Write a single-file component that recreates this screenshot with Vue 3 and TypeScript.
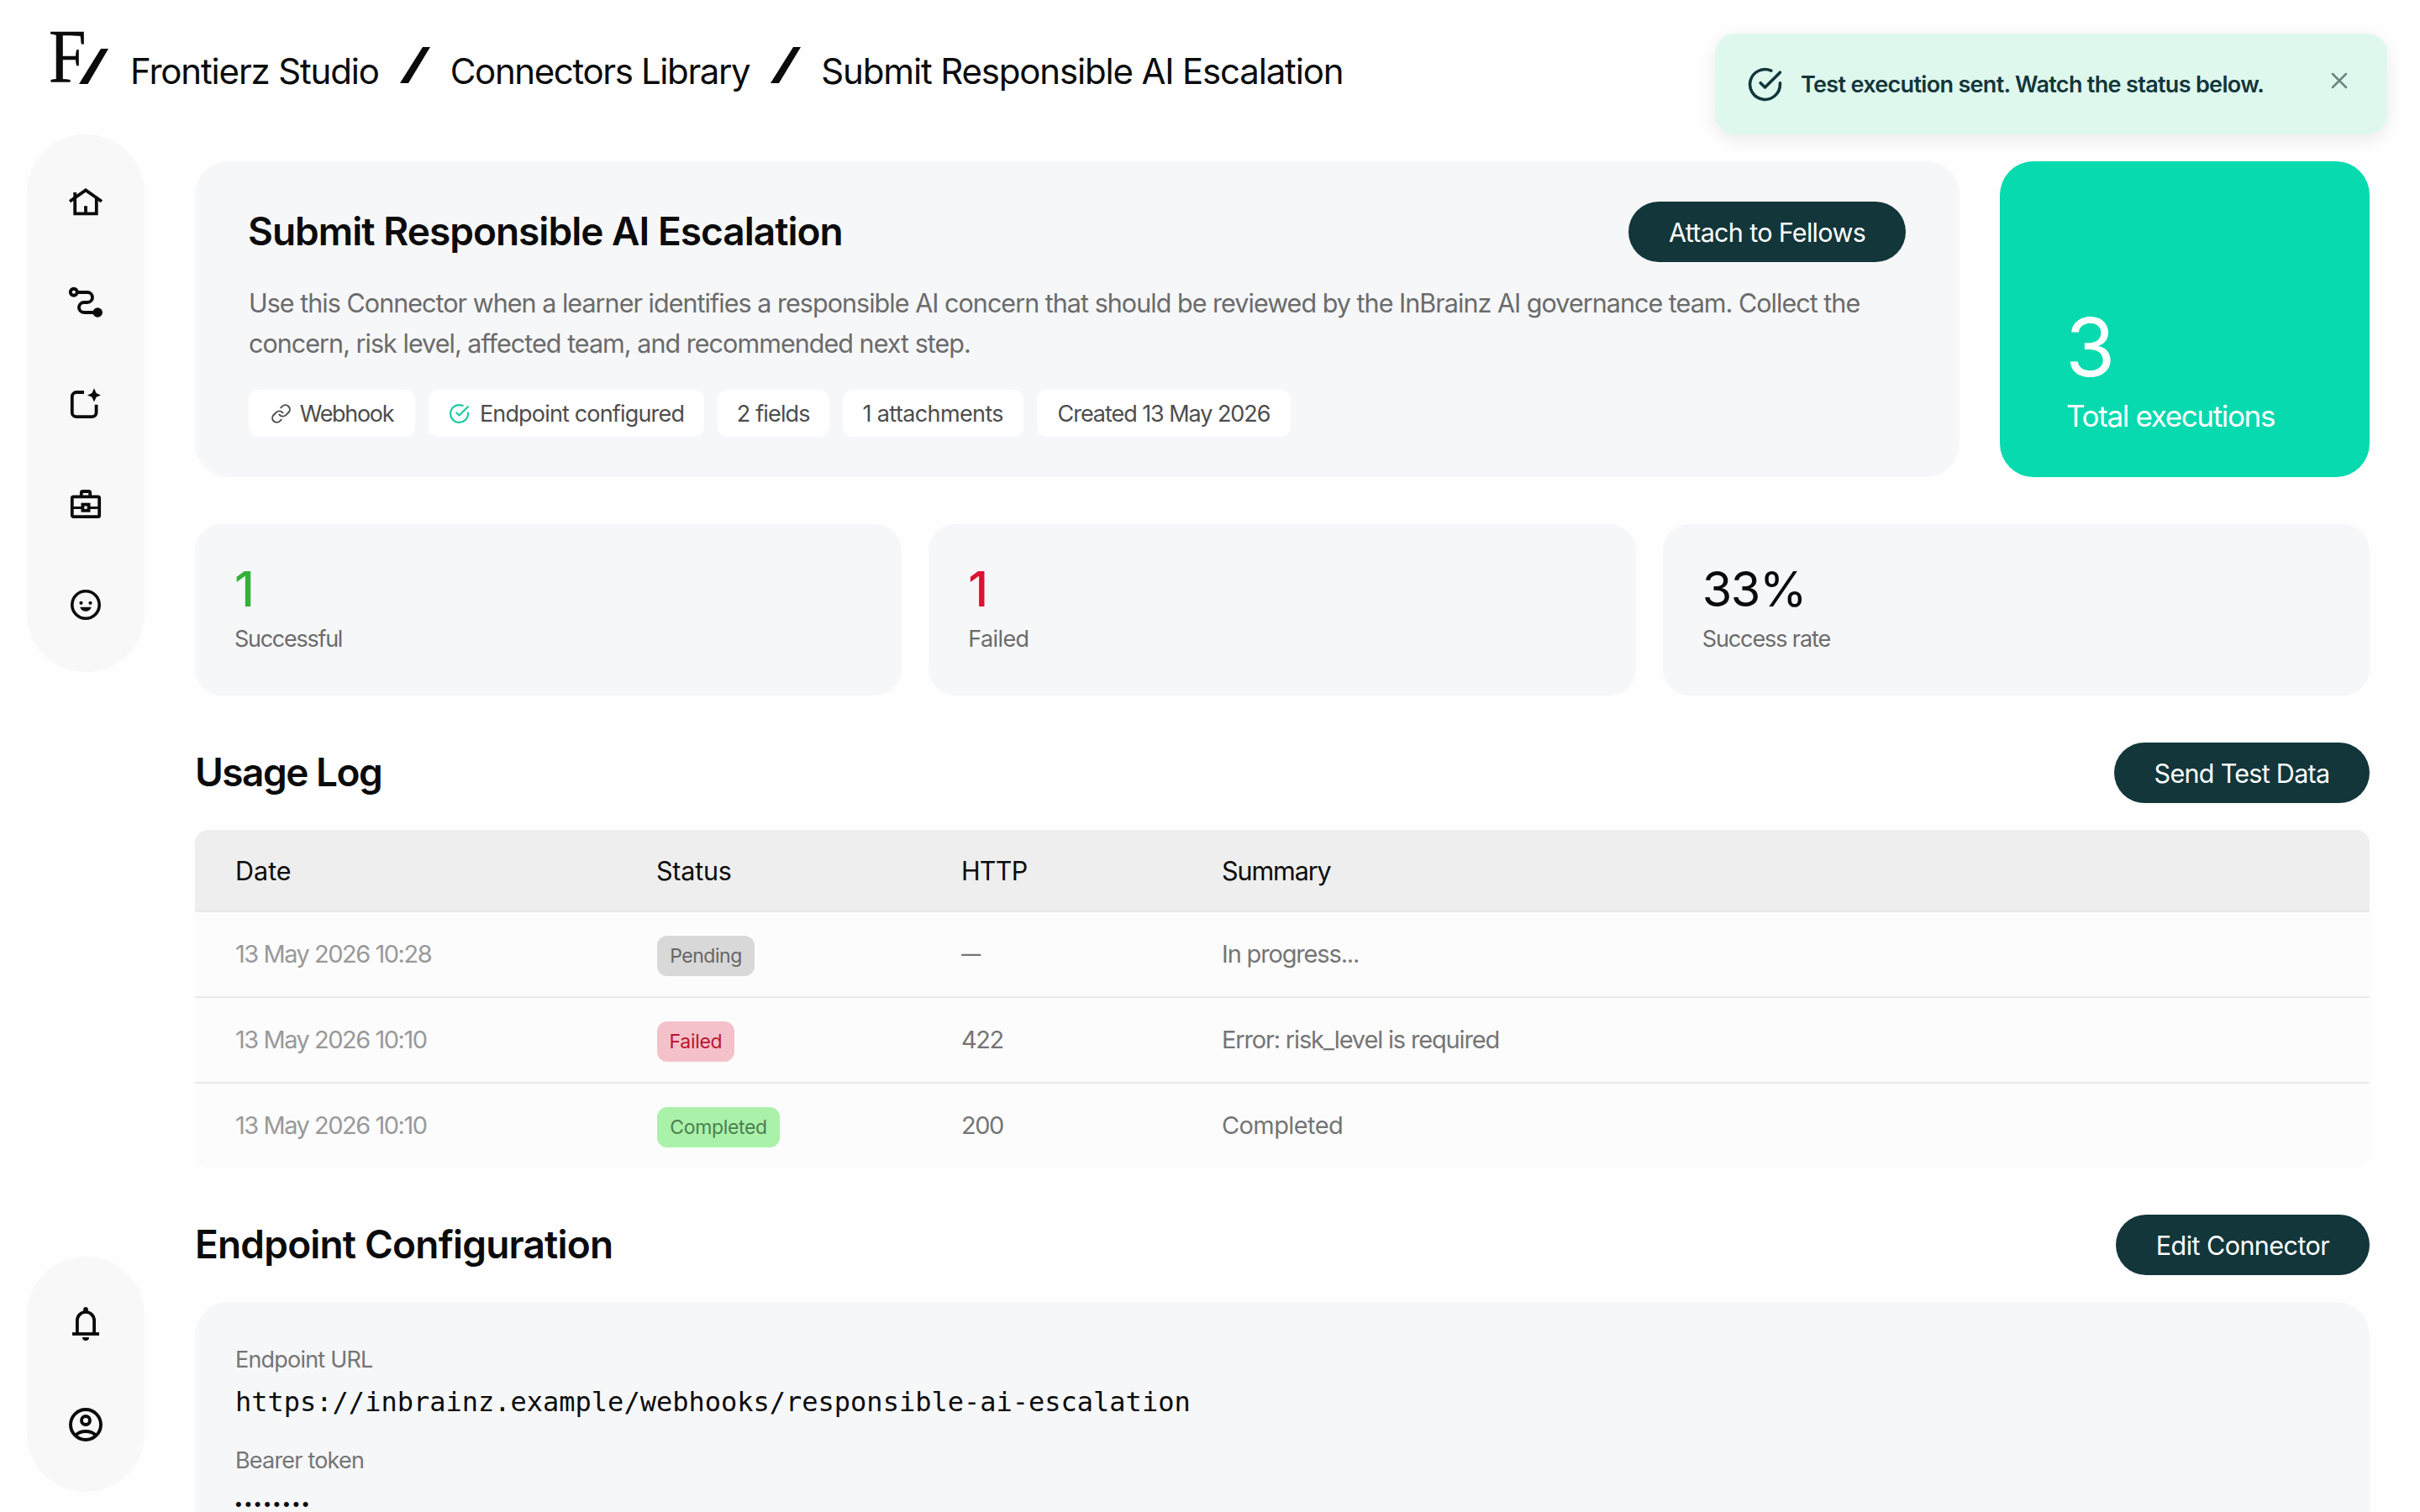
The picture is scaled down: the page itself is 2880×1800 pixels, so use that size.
<script setup lang="ts">
interface Crumb { label: string; tracking: string }
interface Chip { id: string; label: string; tracking: string; icon?: 'link' | 'check' }
interface Stat { value: string; label: string; tone: string; tracking: string }
interface Execution {
  date: string
  status: 'Pending' | 'Failed' | 'Completed'
  http: string
  summary: string
  tracking: string
}

const crumbs: Crumb[] = [
  { label: 'Frontierz Studio', tracking: '-1.17px' },
  { label: 'Connectors Library', tracking: '-1.38px' },
  { label: 'Submit Responsible AI Escalation', tracking: '-1.17px' },
]

const chips: Chip[] = [
  { id: 'webhook', label: 'Webhook', tracking: '-1.3px', icon: 'link' },
  { id: 'endpoint', label: 'Endpoint configured', tracking: '-0.83px', icon: 'check' },
  { id: 'fields', label: '2 fields', tracking: '-0.86px' },
  { id: 'attachments', label: '1 attachments', tracking: '-0.62px' },
  { id: 'created', label: 'Created 13 May 2026', tracking: '-1.06px' },
]

const stats: Stat[] = [
  { value: '1', label: 'Successful', tone: 'good', tracking: '-1.28px' },
  { value: '1', label: 'Failed', tone: 'bad', tracking: '-0.6px' },
  { value: '33%', label: 'Success rate', tone: 'plain', tracking: '-1.1px' },
]

const executions: Execution[] = [
  { date: '13 May 2026 10:28', status: 'Pending', http: '—', summary: 'In progress...', tracking: '-1.16px' },
  { date: '13 May 2026 10:10', status: 'Failed', http: '422', summary: 'Error: risk_level is required', tracking: '-1.17px' },
  { date: '13 May 2026 10:10', status: 'Completed', http: '200', summary: 'Completed', tracking: '-0.6px' },
]
</script>

<template>
  <div class="page">
    <header class="topbar">
      <div class="logo">
        <span class="logo-letter">F</span>
        <svg class="logo-slash" viewBox="0 0 36 42"><path d="M0 42L26 0H35L10.500 42Z" fill="#0b0b0b" /></svg>
      </div>
      <nav class="crumbs">
        <template v-for="(crumb, i) in crumbs" :key="crumb.label">
          <svg v-if="i > 0" class="slash" viewBox="0 0 36 43"><path d="M0 43L27 0H36L10 43Z" fill="#0b0b0b" /></svg>
          <span class="crumb" :style="{ letterSpacing: crumb.tracking }">{{ crumb.label }}</span>
        </template>
      </nav>
    </header>

    <div class="body">
      <aside class="rail">
        <nav class="pill">
          <svg class="nav-icon" viewBox="0 0 24 24" fill="none" stroke="#0b0b0b" stroke-width="1.900">
            <path d="M2.500 11.900L12 5.200L21.500 11.900" />
            <path d="M5.600 6.500V19.200H18.400V9.800" />
            <path d="M12 14.600V19" />
          </svg>
          <svg class="nav-icon" viewBox="0 0 24 24" fill="none" stroke="#0b0b0b" stroke-width="1.950">
            <circle cx="4.900" cy="5.900" r="2" />
            <path d="M7 6H13a3 3 0 0 1 0 6H11a3 3 0 0 0 0 6H17" />
            <circle cx="19.100" cy="18" r="2.900" fill="#0b0b0b" stroke="none" />
          </svg>
          <svg class="nav-icon" viewBox="0 0 24 24" fill="none" stroke="#0b0b0b" stroke-width="1.900">
            <path d="M11 5.500H6.500a2.600 2.600 0 0 0-2.600 2.600V17.500a2.600 2.600 0 0 0 2.600 2.600H15.700a2.600 2.600 0 0 0 2.600-2.600V12.900" />
            <path d="M17 3.100L18.300 6L21 7.200L18.300 8.400L17 11.300L15.700 8.400L13 7.200L15.700 6Z" fill="#0b0b0b" stroke="none" />
          </svg>
          <svg class="nav-icon" viewBox="0 0 24 24" fill="none" stroke="#0b0b0b" stroke-width="1.900">
            <rect x="3.900" y="7.700" width="16.200" height="11.900" rx="0.800" />
            <path d="M9.400 7.500V5.300a0.800 0.800 0 0 1 0.800-0.800H13.800a0.800 0.800 0 0 1 0.800 0.800V7.500" />
            <path d="M4 14.200H9.600M14.400 14.200H20" stroke-width="1.500" />
            <rect x="10.200" y="12.300" width="3.600" height="3.600" />
          </svg>
          <svg class="nav-icon" viewBox="0 0 24 24" fill="none" stroke="#0b0b0b" stroke-width="1.800">
            <circle cx="12" cy="12" r="8.100" />
            <g fill="#0b0b0b" stroke="none">
              <circle cx="9.250" cy="10.900" r="1.050" />
              <circle cx="14.750" cy="10.900" r="1.050" />
              <path d="M8.600 13.400H15.400C14.800 15 13.600 15.900 12 15.900S9.200 15 8.600 13.400Z" />
            </g>
          </svg>
        </nav>
        <nav class="pill">
          <svg class="nav-icon" viewBox="0 0 24 24" fill="none" stroke="#0b0b0b" stroke-width="1.900">
            <path d="M4 18H20" />
            <path d="M6.950 18V10a5.050 5.050 0 0 1 10.100 0V18" />
            <path d="M10.600 5V3.400a1.400 1.400 0 0 1 2.800 0V5Z" fill="#0b0b0b" stroke="none" />
            <path d="M10 20H14a2 2 0 0 1-4 0Z" fill="#0b0b0b" stroke="none" />
          </svg>
          <svg class="nav-icon" viewBox="0 0 24 24" fill="none" stroke="#0b0b0b" stroke-width="1.950">
            <circle cx="12" cy="12" r="9" />
            <circle cx="12" cy="9.500" r="2.500" />
            <path d="M5.900 18.300C7.500 16.800 9.600 16 12 16S16.500 16.800 18.100 18.300" />
          </svg>
        </nav>
      </aside>

      <main class="content">
        <section class="hero">
          <div class="card intro">
            <div class="row-between">
              <h1 class="title intro-title">Submit Responsible AI Escalation</h1>
              <button class="btn btn-attach">Attach to Fellows</button>
            </div>
            <p class="description">
              Use this Connector when a learner identifies a responsible AI concern that should be reviewed by the InBrainz AI governance team. Collect the<br />concern, risk level, affected team, and recommended next step.
            </p>
            <div class="chips">
              <span v-for="chip in chips" :key="chip.id" class="chip" :class="chip.id">
                <svg v-if="chip.icon === 'link'" class="chip-icon" viewBox="0 0 24 24" fill="none" stroke="#4d4d4d" stroke-width="1.900" stroke-linecap="round" stroke-linejoin="round">
                  <path d="M10 13a5 5 0 0 0 7.540.540l3-3a5 5 0 0 0-7.070-7.070l-1.720 1.710" />
                  <path d="M14 11a5 5 0 0 0-7.540-.540l-3 3a5 5 0 0 0 7.070 7.070l1.710-1.710" />
                </svg>
                <svg v-if="chip.icon === 'check'" class="chip-icon" viewBox="0 0 24 24" fill="none" stroke="#1ccaa2" stroke-width="2.100" stroke-linecap="round" stroke-linejoin="round">
                  <path d="M22 11.080V12a10 10 0 1 1-5.930-9.140" />
                  <path d="M22 4L12 14.010L9 11.010" />
                </svg>
                <span :style="{ letterSpacing: chip.tracking }">{{ chip.label }}</span>
              </span>
            </div>
          </div>
          <div class="total">
            <span class="total-value">3</span>
            <span class="total-label">Total executions</span>
          </div>
        </section>

        <section class="stats">
          <div v-for="stat in stats" :key="stat.label" class="stat">
            <div class="stat-value" :class="stat.tone">{{ stat.value }}</div>
            <div class="stat-label" :style="{ letterSpacing: stat.tracking }">{{ stat.label }}</div>
          </div>
        </section>

        <section class="section">
          <div class="row-between">
            <h2 class="title usage-title">Usage Log</h2>
            <button class="btn btn-send">Send Test Data</button>
          </div>
          <div class="table">
            <div class="tr th">
              <span class="h-date">Date</span>
              <span class="h-status">Status</span>
              <span class="h-http">HTTP</span>
              <span class="h-summary">Summary</span>
            </div>
            <div v-for="run in executions" :key="run.status" class="tr td">
              <span class="date">{{ run.date }}</span>
              <span><span class="badge" :class="run.status.toLowerCase()">{{ run.status }}</span></span>
              <span class="http" :class="{ dash: run.http === '—' }">{{ run.http }}</span>
              <span class="summary" :style="{ letterSpacing: run.tracking }">{{ run.summary }}</span>
            </div>
          </div>
        </section>

        <section class="section">
          <div class="row-between">
            <h2 class="title endpoint-title">Endpoint Configuration</h2>
            <button class="btn btn-edit">Edit Connector</button>
          </div>
          <div class="card config">
            <div class="field-label">Endpoint URL</div>
            <div class="field-value">https://inbrainz.example/webhooks/responsible-ai-escalation</div>
            <div class="field-label token">Bearer token</div>
            <div class="field-dots">••••••••</div>
          </div>
        </section>
      </main>
    </div>

    <div class="toast">
      <svg class="toast-icon" viewBox="0 0 24 24" fill="none" stroke="#11363a" stroke-width="2" stroke-linecap="round" stroke-linejoin="round">
        <path d="M22 11.080V12a10 10 0 1 1-5.930-9.140" />
        <path d="M22 4L12 14.010L9 11.010" />
      </svg>
      <span class="toast-text">Test execution sent. Watch the status below.</span>
      <svg class="toast-close" viewBox="0 0 20 20" fill="none" stroke="#68857f" stroke-width="2.500" stroke-linecap="round">
        <path d="M2 2L18 18M18 2L2 18" />
      </svg>
    </div>
  </div>
</template>

<style>
body {
  background: #fff;
}
</style>

<style scoped>
.page {
  position: relative;
  width: 2880px;
  height: 1800px;
  overflow: hidden;
  background: #fefefe;
  color: #0b0b0b;
  font-family: Inter, "Liberation Sans", sans-serif;
  white-space: nowrap;
}
.topbar {
  box-sizing: border-box;
  height: 160px;
  padding: 40px 0 0 60px;
  display: flex;
  align-items: flex-start;
}
.logo {
  position: relative;
  width: 70px;
  height: 60px;
  margin-right: 25px;
}
.logo-letter {
  display: block;
  margin-left: -2px;
  font: 400 90px/56px "Liberation Serif", serif;
  -webkit-text-stroke: 0.600px #0b0b0b;
  transform: scaleX(0.89);
  transform-origin: left;
}
.logo-slash {
  position: absolute;
  left: 34px;
  top: 17.500px;
  width: 36px;
  height: 42px;
}
.crumbs {
  display: flex;
  padding-top: 16px;
}
.crumb {
  position: relative;
  top: 1px;
  font-size: 42px;
  line-height: 56px;
}
.slash {
  width: 36px;
  height: 43px;
  margin: 0 24px 0 25px;
}
.body {
  display: flex;
  height: 1640px;
}
.rail {
  box-sizing: border-box;
  width: 140px;
  margin: 0 60px 0 32px;
  padding-bottom: 24px;
  flex: none;
  display: flex;
  flex-direction: column;
  justify-content: space-between;
}
.pill {
  display: flex;
  flex-direction: column;
  align-items: center;
  gap: 72px;
  padding: 56px 0;
  border-radius: 70px;
  background: #f8f8f8;
}
.nav-icon {
  width: 48px;
  height: 48px;
}
.content {
  width: 2588px;
  padding-top: 32px;
  display: flex;
  flex-direction: column;
  gap: 56px;
}
.hero {
  display: flex;
  gap: 48px;
}
.card {
  box-sizing: border-box;
  border-radius: 40px;
  background: #f6f7f9;
}
.intro {
  width: 2100px;
  height: 376px;
  padding: 48px 64px;
}
.row-between {
  display: flex;
  align-items: center;
  justify-content: space-between;
  height: 72px;
}
.title {
  margin: 0;
  font-size: 46px;
  line-height: 70px;
  padding-bottom: 2px;
  font-weight: 600;
}
.intro-title {
  margin-left: -1px;
  letter-spacing: -0.980px;
}
.usage-title {
  letter-spacing: -1.500px;
}
.endpoint-title {
  letter-spacing: -0.820px;
}
.btn {
  height: 72px;
  padding: 1px 0 0;
  border: 0;
  border-radius: 36px;
  background: #12363a;
  color: #fff;
  font-family: inherit;
  font-size: 30.500px;
  line-height: 71px;
  text-align: center;
}
.btn-attach {
  width: 330px;
  letter-spacing: -0.673px;
}
.btn-send {
  width: 304px;
  letter-spacing: -0.710px;
}
.btn-edit {
  width: 302px;
  letter-spacing: -0.556px;
}
.description {
  margin: 25px 0 31px;
  color: #6b6b6b;
  font-size: 30.500px;
  line-height: 48px;
  letter-spacing: -0.970px;
}
.chips {
  display: flex;
  gap: 16px;
}
.chip {
  display: flex;
  align-items: center;
  justify-content: center;
  gap: 12px;
  height: 56px;
  border-radius: 12px;
  background: #fff;
  color: #4d4d4d;
  font-size: 27px;
}
.chip-icon {
  width: 25px;
  height: 25px;
}
.chip.webhook { width: 198px; gap: 10px; }
.chip.endpoint { width: 328px; }
.chip.fields { width: 132.500px; }
.chip.attachments { width: 215.500px; }
.chip.created { width: 302px; }
.total {
  box-sizing: border-box;
  width: 440px;
  height: 376px;
  padding: 0 0 49px 79px;
  border-radius: 40px;
  background: #06daae;
  color: #fff;
  display: flex;
  flex-direction: column;
  justify-content: flex-end;
}
.total-value {
  margin: 0 0 10px -1px;
  font-size: 96px;
  line-height: 96px;
}
.total-label {
  font-size: 35px;
  line-height: 48px;
  letter-spacing: -1.344px;
}
.stats {
  display: grid;
  grid-template-columns: repeat(3, 1fr);
  gap: 32px;
}
.stat {
  box-sizing: border-box;
  height: 204px;
  padding: 41px 47px 0;
  border-radius: 32px;
  background: #f6f7f9;
}
.stat-value {
  font-size: 57.500px;
  line-height: 72px;
  letter-spacing: -1.300px;
}
.stat-value.good { color: #34b13a; font-weight: 500; }
.stat-value.bad { color: #dc1232; font-weight: 500; }
.stat-label {
  margin-top: 4px;
  color: #6b6b6b;
  font-size: 27px;
  line-height: 40px;
}
.section {
  display: flex;
  flex-direction: column;
  gap: 32px;
}
.table {
  border-radius: 16px;
  overflow: hidden;
  background: #fcfcfc;
}
.tr {
  box-sizing: border-box;
  display: grid;
  grid-template-columns: 502px 362px 310px 1fr;
  align-items: center;
  padding-left: 48px;
  height: 102px;
  border-bottom: 2px solid #e9e9e9;
}
.tr:last-child {
  height: 100px;
  border-bottom: 0;
}
.th {
  height: 98px;
  background: #eeeeee;
  font-size: 30.500px;
}
.h-status { margin-left: -1px; letter-spacing: -0.200px; }
.h-http { letter-spacing: -0.800px; }
.h-summary { letter-spacing: -1.100px; }
.td {
  color: #757575;
  font-size: 29px;
}
.date,
.http,
.summary {
  padding-bottom: 2px;
}
.date {
  color: #999;
  letter-spacing: -1.480px;
}
.http {
  letter-spacing: -1.500px;
}
.http.dash {
  transform: scaleX(0.8);
  transform-origin: left;
}
.badge {
  display: block;
  height: 48px;
  margin-top: 4px;
  border-radius: 12px;
  font-size: 23px;
  line-height: 48px;
  text-align: center;
}
.badge.pending {
  width: 116px;
  background: #d8d8d8;
  color: #666;
  letter-spacing: -0.484px;
}
.badge.failed {
  width: 92px;
  background: #f4c1ca;
  color: #b9142e;
  letter-spacing: -0.296px;
}
.badge.completed {
  width: 146px;
  background: #aaf1aa;
  color: #4a8050;
  letter-spacing: -0.351px;
}
.config {
  height: 600px;
  padding: 49px 48px 0;
}
.field-label {
  color: #757575;
  font-size: 27px;
  line-height: 40px;
  letter-spacing: -0.800px;
}
.field-label.token {
  margin-top: 26px;
}
.field-value {
  margin-top: 6px;
  font: 32px/48px "DejaVu Sans Mono", monospace;
}
.field-dots {
  padding-top: 24px;
  font: 22px/16px "Liberation Sans", sans-serif;
  letter-spacing: 3.700px;
}
.toast {
  position: absolute;
  box-sizing: border-box;
  top: 40px;
  left: 2041px;
  width: 800px;
  height: 120px;
  padding: 0 47px 0 38px;
  display: flex;
  align-items: center;
  border-radius: 24px;
  background: #dff8ee;
  box-shadow: 0 6px 20px rgba(0, 0, 0, 0.08);
}
.toast-icon {
  width: 43px;
  height: 43px;
  margin-right: 21px;
}
.toast-text {
  flex: 1;
  color: #12363a;
  font-size: 27px;
  font-weight: 600;
  letter-spacing: -0.680px;
}
.toast-close {
  width: 20px;
  height: 20px;
  margin-top: -8px;
}
</style>
